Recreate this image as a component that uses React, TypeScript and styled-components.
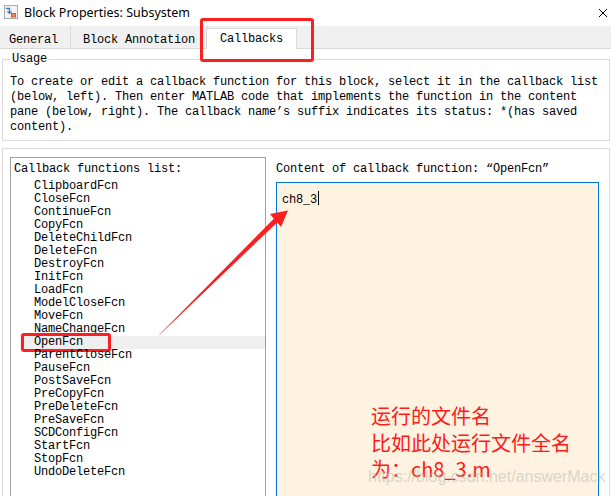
import React from "react";
import styled, { createGlobalStyle } from "styled-components";

const GlobalStyle = createGlobalStyle`
  html, body {
    margin: 0;
    padding: 0;
    background: #fff;
  }
  body {
    width: 611px;
    height: 496px;
    overflow: hidden;
  }
`;

const mono = `"Liberation Mono", "DejaVu Sans Mono", monospace`;

const Window = styled.div`
  position: relative;
  width: 611px;
  height: 496px;
  overflow: hidden;
  display: flex;
  flex-direction: column;
  background: #fff;
  font-family: ${mono};
  font-size: 12px;
  letter-spacing: -0.2px;
  color: #000;
`;

const TitleBar = styled.div`
  height: 26px;
  flex-shrink: 0;
  display: flex;
  align-items: center;
  padding: 0 3px 2px 4px;
  box-sizing: border-box;
  font-family: "Noto Sans", "Liberation Sans", sans-serif;
  font-size: 12.5px;
  letter-spacing: 0;
`;

const TitleText = styled.span`
  margin-left: 6px;
`;

const CloseButton = styled.span`
  margin-left: auto;
  display: flex;
  padding-top: 2px;
`;

const TabBar = styled.div`
  height: 22px;
  flex-shrink: 0;
  display: flex;
  background: #f0f0f0;
  border-bottom: 1px solid #d9d9d9;
`;

const Tab = styled.div<{ $active?: boolean; $first?: boolean }>`
  display: flex;
  align-items: center;
  padding: ${(p) => (p.$active ? "0 13px 1px" : p.$first ? "5px 12px 0 9px" : "5px 12px 0")};
  border-right: 1px solid #d9d9d9;
  white-space: nowrap;
  ${(p) =>
    p.$active &&
    `
    background: #fff;
    border: 1px solid #d9d9d9;
    border-bottom: none;
    margin: 2px 0 -1px -2px;
    position: relative;
  `}
`;

const Body = styled.div`
  flex: 1;
  min-height: 0;
  display: flex;
  flex-direction: column;
  padding: 0 1px 0 2px;
`;

const Usage = styled.fieldset`
  margin: 3px 0 0;
  padding: 0 7px 5px;
  border: 1px solid #dcdcdc;
  min-width: 0;
`;

const Legend = styled.legend`
  padding: 0 2px;
  line-height: 14px;
`;

const UsageText = styled.div`
  margin-top: 9px;
  line-height: 15px;
`;

const Line = styled.div`
  white-space: nowrap;
`;

const CallbackGroup = styled.div`
  flex: 1;
  min-height: 0;
  margin-top: 7px;
  display: flex;
  gap: 10px;
  padding: 8px 10px 0 7px;
  border: 1px solid #dcdcdc;
  border-bottom: none;
`;

const ListBox = styled.div`
  width: 256px;
  flex-shrink: 0;
  box-sizing: border-box;
  border: 1px solid #a0a0a0;
  border-bottom: none;
  padding: 5px 0 0 3px;
  line-height: 13px;
`;

const Items = styled.div`
  margin-top: 4px;
`;

const Item = styled.div<{ $selected?: boolean }>`
  position: relative;
  margin-left: 6px;
  padding-left: 14px;
  background: ${(p) => (p.$selected ? "#efefef" : "transparent")};
`;

const Mark = styled.div`
  position: absolute;
  box-sizing: border-box;
  border: 3px solid #fb1f1f;
  border-radius: 3px;
`;

const ItemMark = styled(Mark)`
  left: 1px;
  top: -3px;
  width: 90px;
  height: 19px;
`;

const TabMark = styled(Mark)`
  left: 200px;
  top: 18px;
  width: 114px;
  height: 44px;
`;

const RightPane = styled.div`
  flex: 1;
  display: flex;
  flex-direction: column;
  padding-top: 6px;
  line-height: 13px;
`;

const Editor = styled.div`
  position: relative;
  flex: 1;
  margin-top: 6px;
  background: #fef3e0;
  border: 1px solid #0078d7;
  border-bottom: none;
  padding: 8px 5px;
  line-height: 13px;
`;

const Caret = styled.span`
  display: inline-block;
  width: 0;
  height: 14px;
  border-left: 1px solid #000;
  margin-left: 1px;
  vertical-align: -2px;
`;

const Note = styled.div`
  position: absolute;
  left: 94px;
  top: 220px;
  font-family: "Noto Sans CJK SC", "Noto Sans", sans-serif;
  font-size: 20px;
  line-height: 26.5px;
  letter-spacing: 0;
  color: #ff1a1a;
  white-space: nowrap;
`;

const Watermark = styled.div`
  position: absolute;
  left: 368px;
  top: 468px;
  font-family: "Liberation Sans", sans-serif;
  font-size: 16px;
  letter-spacing: 0;
  color: rgba(185, 185, 185, 0.55);
  white-space: nowrap;
`;

const Overlay = styled.svg`
  position: absolute;
  left: 0;
  top: 0;
  pointer-events: none;
`;

const callbacks = [
  "ClipboardFcn",
  "CloseFcn",
  "ContinueFcn",
  "CopyFcn",
  "DeleteChildFcn",
  "DeleteFcn",
  "DestroyFcn",
  "InitFcn",
  "LoadFcn",
  "ModelCloseFcn",
  "MoveFcn",
  "NameChangeFcn",
  "OpenFcn",
  "ParentCloseFcn",
  "PauseFcn",
  "PostSaveFcn",
  "PreCopyFcn",
  "PreDeleteFcn",
  "PreSaveFcn",
  "SCDConfigFcn",
  "StartFcn",
  "StopFcn",
  "UndoDeleteFcn"
];

const BlockIcon = () => (
  <svg width="14" height="14" viewBox="0 0 14 14">
    <rect x="0.5" y="0.5" width="13" height="13" fill="#f3f3f3" stroke="#a8acb2" />
    <path d="M2 3.5 H5.5 V8" stroke="#4a78b5" strokeWidth="1.4" fill="none" />
    <path d="M3.5 6.5 L5.5 8.5 L7.5 6.5" stroke="#4a78b5" strokeWidth="1.2" fill="none" />
    <rect x="7" y="8" width="5" height="4.5" fill="#e2552a" />
    <rect x="8" y="9" width="3" height="2.5" fill="#f28a5a" />
  </svg>
);

const CloseIcon = () => (
  <svg width="10" height="10" viewBox="0 0 10 10">
    <path d="M1 1 L9 9 M9 1 L1 9" stroke="#000" strokeWidth="1" />
  </svg>
);

const App: React.FunctionComponent = () => (
  <Window>
    <GlobalStyle />
    <TitleBar>
      <BlockIcon />
      <TitleText>Block Properties: Subsystem</TitleText>
      <CloseButton>
        <CloseIcon />
      </CloseButton>
    </TitleBar>
    <TabBar>
      <Tab $first>General</Tab>
      <Tab>Block Annotation</Tab>
      <Tab $active>Callbacks</Tab>
    </TabBar>
    <Body>
      <Usage>
        <Legend>Usage</Legend>
        <UsageText>
          <Line>To create or edit a callback function for this block, select it in the callback list</Line>
          <Line>(below, left). Then enter MATLAB code that implements the function in the content</Line>
          <Line>pane (below, right). The callback name’s suffix indicates its status: *(has saved</Line>
          <Line>content).</Line>
        </UsageText>
      </Usage>
      <CallbackGroup>
        <ListBox>
          <div>Callback functions list:</div>
          <Items>
            {callbacks.map((name) => (
              <Item key={name} $selected={name === "OpenFcn"}>
                {name}
                {name === "OpenFcn" && <ItemMark />}
              </Item>
            ))}
          </Items>
        </ListBox>
        <RightPane>
          <div>Content of callback function: “OpenFcn”</div>
          <Editor>
            ch8_3
            <Caret />
            <Note>
              <div>运行的文件名</div>
              <div>比如此处运行文件全名</div>
              <div>为：ch8_3.m</div>
            </Note>
          </Editor>
        </RightPane>
      </CallbackGroup>
    </Body>
    <TabMark />
    <Watermark>https://blog.csdn.net/answerMack</Watermark>
    <Overlay width="611" height="496" viewBox="0 0 611 496">
      <polygon
        points="158.5,335.5 160,334.6 277.2,222.4 281,227 288,210.5 270,214 273.8,218.7"
        fill="#fb1f1f"
      />
    </Overlay>
  </Window>
);

export default App;
